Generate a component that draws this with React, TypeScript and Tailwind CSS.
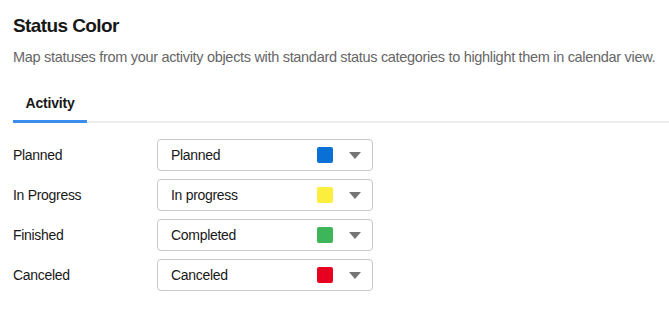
import React from "react";

const rows = [
  { label: "Planned", value: "Planned", color: "bg-[#0a70d6]" },
  { label: "In Progress", value: "In progress", color: "bg-[#fcee3c]" },
  { label: "Finished", value: "Completed", color: "bg-[#3db65a]" },
  { label: "Canceled", value: "Canceled", color: "bg-[#e80020]" },
];

export default function App() {
  return (
    <div className="w-[669px] h-[309px] bg-white pl-[13px] pt-[14px] text-[#181818] overflow-hidden" style={{ fontFamily: "'Liberation Sans', Arial, sans-serif" }}>
      <h1 className="text-[19px] font-bold leading-[24px] tracking-[-0.6px]">Status Color</h1>
      <p className="mt-[9px] text-[14.5px] leading-[20px] tracking-[-0.31px] text-[#666] whitespace-nowrap">
        Map statuses from your activity objects with standard status categories to highlight them in calendar view.
      </p>
      <div className="mt-[26px] border-b-2 border-[#ededed] flex">
        <div className="relative w-[74px] text-center text-[14px] tracking-[-0.2px] font-bold leading-[20px] pb-[8px]">
          Activity
          <div className="absolute left-0 right-0 bottom-[-2px] h-[3px] bg-[#3b8ef0]" />
        </div>
      </div>
      <div className="mt-[16px] flex flex-col gap-[8px] text-[14px] tracking-[-0.3px]">
        {rows.map((r) => (
          <div key={r.label} className="flex items-center">
            <div className="w-[144px]">{r.label}</div>
            <div className="w-[216px] h-[32px] border border-[#c9c9c9] rounded-[4px] flex items-center pl-[13px] pr-[11px]">
              <span className="flex-1">{r.value}</span>
              <span className={`w-[16px] h-[16px] rounded-[2px] ${r.color}`} />
              <svg width="12" height="7" viewBox="0 0 12 7" className="ml-[16px]">
                <path d="M0 0 L12 0 L6 7 Z" fill="#757575" />
              </svg>
            </div>
          </div>
        ))}
      </div>
    </div>
  );
}
